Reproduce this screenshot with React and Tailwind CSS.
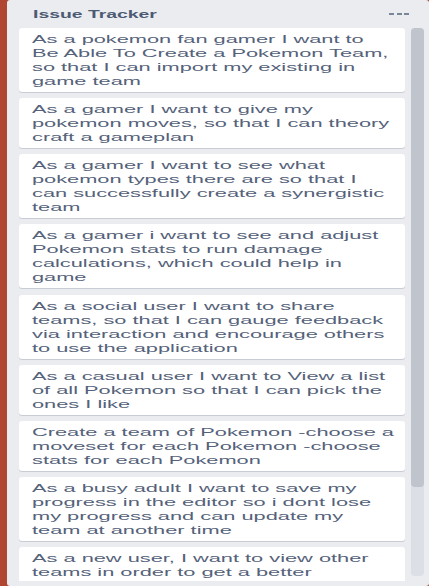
import React from "react";

const cards = [
  [
    "As a pokemon fan gamer I want to",
    "Be Able To Create a Pokemon Team,",
    "so that I can import my existing in",
    "game team",
  ],
  [
    "As a gamer I want to give my",
    "pokemon moves, so that I can theory",
    "craft a gameplan",
  ],
  [
    "As a gamer I want to see what",
    "pokemon types there are so that I",
    "can successfully create a synergistic",
    "team",
  ],
  [
    "As a gamer i want to see and adjust",
    "Pokemon stats to run damage",
    "calculations, which could help in",
    "game",
  ],
  [
    "As a social user I want to share",
    "teams, so that I can gauge feedback",
    "via interaction and encourage others",
    "to use the application",
  ],
  [
    "As a casual user I want to View a list",
    "of all Pokemon so that I can pick the",
    "ones I like",
  ],
  [
    "Create a team of Pokemon -choose a",
    "moveset for each Pokemon -choose",
    "stats for each Pokemon",
  ],
  [
    "As a busy adult I want to save my",
    "progress in the editor so i dont lose",
    "my progress and can update my",
    "team at another time",
  ],
  ["As a new user, I want to view other", "teams in order to get a better"],
];

function Card({ lines }) {
  return (
    <div className="shrink-0 rounded-[3px] bg-white px-[13px] pt-[4px] pb-[4px] shadow-[0_1px_0_#c9ccd4]">
      <p className="w-[181px] origin-left scale-x-[1.98] text-[11px] leading-[14px] text-[#55627a]">
        {lines.map((l) => (
          <span key={l} className="block whitespace-nowrap">
            {l}
          </span>
        ))}
      </p>
    </div>
  );
}

export default function App() {
  return (
    <div className="h-[586px] w-[429px] overflow-hidden bg-[#b04632] pl-[7px] font-['Liberation_Sans',Arial,sans-serif]">
      <div className="flex h-full flex-col rounded-[3px] bg-[#ebecf0]">
        <div className="flex h-[28px] shrink-0 items-center justify-between pl-[26px] pr-[20px]">
          <h2 className="origin-left scale-x-[1.76] text-[11px] font-bold leading-[14px] text-[#4c5a73]">
            Issue Tracker
          </h2>
          <div className="flex gap-[2.5px]">
            <span className="h-[2px] w-[5px] bg-[#7a869a]" />
            <span className="h-[2px] w-[5px] bg-[#7a869a]" />
            <span className="h-[2px] w-[5px] bg-[#7a869a]" />
          </div>
        </div>
        <div className="flex pl-[12px]">
          <div className="flex h-[553px] w-[386px] flex-col gap-[6.15px] overflow-hidden">
            {cards.map((c) => (
              <Card key={c[0]} lines={c} />
            ))}
          </div>
          <div className="ml-[6px] h-[548px] w-[13px] rounded-[4px] bg-[#dcdfe5]">
            <div className="h-[459px] rounded-[4px] bg-[#bfc4cd]" />
          </div>
        </div>
      </div>
    </div>
  );
}
